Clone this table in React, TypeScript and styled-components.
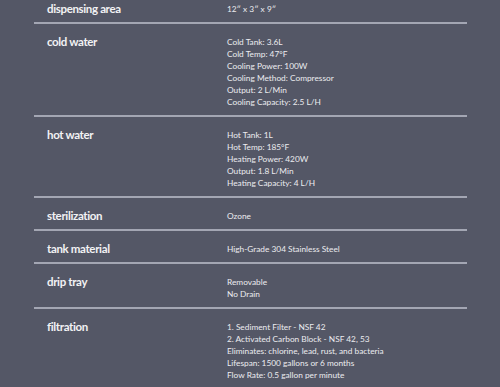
import React from "react";
import styled, { createGlobalStyle } from "styled-components";

const GlobalStyle = createGlobalStyle`
  html, body {
    margin: 0;
    padding: 0;
    background: #545766;
  }
  body {
    font-family: "Lato", "Noto Sans", sans-serif;
    -webkit-font-smoothing: antialiased;
  }
`;

type Spec = { label: string; values: string[] };

const specs: Spec[] = [
  { label: "dispensing area", values: ["12\u2033 x 3\u2033 x 9\u2033"] },
  {
    label: "cold water",
    values: [
      "Cold Tank: 3.6L",
      "Cold Temp: 47°F",
      "Cooling Power: 100W",
      "Cooling Method: Compressor",
      "Output: 2 L/Min",
      "Cooling Capacity: 2.5 L/H",
    ],
  },
  {
    label: "hot water",
    values: [
      "Hot Tank: 1L",
      "Hot Temp: 185°F",
      "Heating Power: 420W",
      "Output: 1.8 L/Min",
      "Heating Capacity: 4 L/H",
    ],
  },
  { label: "sterilization", values: ["Ozone"] },
  { label: "tank material", values: ["High-Grade 304 Stainless Steel"] },
  { label: "drip tray", values: ["Removable", "No Drain"] },
  {
    label: "filtration",
    values: [
      "1. Sediment Filter - NSF 42",
      "2. Activated Carbon Block - NSF 42, 53",
      "Eliminates: chlorine, lead, rust, and bacteria",
      "Lifespan: 1500 gallons or 6 months",
      "Flow Rate: 0.5 gallon per minute",
    ],
  },
];

export default function App() {
  return (
    <>
      <GlobalStyle />
      <SpecTable>
        {specs.map((s, i) => (
          <SpecRow key={s.label} last={i === specs.length - 1}>
            <Label>{s.label}</Label>
            <Values>
              {s.values.map((v) => (
                <li key={v}>{v}</li>
              ))}
            </Values>
          </SpecRow>
        ))}
      </SpecTable>
    </>
  );
}

const SpecTable = styled.div`
  width: 433px;
  margin: -9px 0 0 34px;
`;

const SpecRow = styled.div<{ last?: boolean }>`
  display: grid;
  grid-template-columns: 180px 1fr;
  padding: 12px 0 7px 13px;
  border-bottom: ${(p) => (p.last ? "none" : "2px solid #a3a6b3")};
`;

const Label = styled.div`
  color: #f2f2f4;
  font-size: 11.5px;
  font-weight: 700;
  line-height: 12px;
  letter-spacing: -0.35px;
`;

const Values = styled.ul`
  list-style: none;
  margin: 0;
  padding: 0;
  color: #ececf0;
  font-size: 8.3px;
  line-height: 12px;
  font-weight: 400;
`;
